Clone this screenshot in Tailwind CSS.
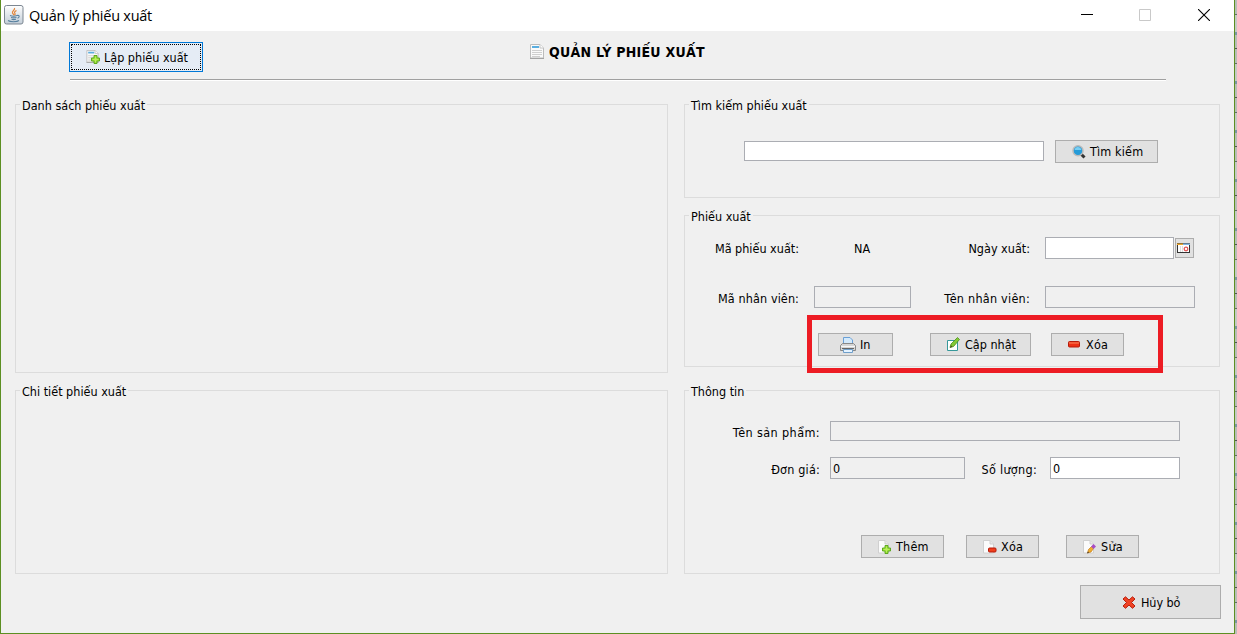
<!DOCTYPE html>
<html lang="vi">
<head>
<meta charset="utf-8">
<title>Quản lý phiếu xuất</title>
<script src="https://cdn.jsdelivr.net/npm/@tailwindcss/browser@4"></script>
</head>
<body class="w-[1237px] h-[634px] overflow-hidden flex bg-[#b9bdb7] text-black text-[12.5px] leading-[17px] whitespace-nowrap font-['DejaVu_Sans_Condensed','DejaVu_Sans',sans-serif]">
<svg class="hidden">
  <symbol id="page" viewBox="0 0 14 15"><path d="M.5 .5H10l3.500 3.500V14H.5Z" fill="#fafafa" stroke="#bcbcbc"/><path d="M10 .5V4h3.500" fill="#fff" stroke="#c4c4c4"/><path d="M2 2h7v2H2Z" fill="#5aaee0"/><path d="M2 6.500h10M2 8.500h10M2 10.500h10M2 12.500h8" stroke="#cfcfcf"/><path d="M0 14.500h14" stroke="#a4a4a4"/></symbol>
  <symbol id="blank" viewBox="0 0 14 14"><path d="M1.500 .5H8L11.500 4v9H1.500Z" fill="#fbfbfb" stroke="#d0d0d0"/><path d="M8 .5V4h3.500" fill="#e8e8e8" stroke="#cfcfcf"/></symbol>
  <symbol id="plus" viewBox="0 0 9 9"><path d="M3 .5h3V3h2.500v3H6v2.500H3V6H.5V3H3Z" fill="#8fd92b" stroke="#55a31a" stroke-width=".9"/><path d="M4.500 1.500v6M1.500 4.500h6" stroke="#b9ee5c" stroke-width="1.400"/></symbol>
</svg>
<div class="relative w-[1235px] h-[634px] flex flex-col border-x border-b border-[#5c8f22] bg-[#f0f0f0]">
  <header class="h-[31px] shrink-0 bg-white flex items-center">
    <svg class="ml-[3px] -mt-px w-5 h-5" viewBox="0 0 20 20"><defs><linearGradient id="jg" x2="0" y2="1"><stop stop-color="#fff"/><stop offset="1" stop-color="#c3ced8"/></linearGradient></defs><rect x=".5" y=".5" width="18.500" height="18.500" rx="2" fill="url(#jg)" stroke="#7d8792"/><path d="M10.500 3c1 2-3 3-2 5 .4 1 1.500 1.500 1.200 2.500M12.500 5.500c-2 1-2.500 2-1.500 3 .4.5 0 1.200-.5 1.700" fill="none" stroke="#e2873c" stroke-width="1.200"/><path d="M6 10.500c2 .8 5 .8 7 0M7 12.500c2 .6 3.500.6 5.500 0M7.500 14.300c1.500.5 3 .5 4.500 0M4 15.500c2 1.600 9 1.600 11 0M13 10.500c3-.6 2.600 2 .5 2.800" fill="none" stroke="#58819f" stroke-width="1.100"/></svg>
    <h1 class="ml-[5px] w-[1052px] text-[14.500px] leading-5 tracking-[-0.25px] font-['Open_Sans','Noto_Sans',sans-serif]">Quản lý phiếu xuất</h1>
    <svg class="-mt-px w-3 h-3" viewBox="0 0 12 12"><path d="M0 5.500h12" stroke="#000"/></svg>
    <svg class="-mt-px ml-[46px] w-3 h-3" viewBox="0 0 12 12"><path d="M.5 .5h11v11H.5Z" fill="none" stroke="#c9c9c9"/></svg>
    <svg class="-mt-px ml-[47px] w-3 h-3" viewBox="0 0 12 12"><path d="M0 0l12 12M12 0L0 12" stroke="#000" stroke-width="1.100"/></svg>
  </header>

  <div class="h-[48px] shrink-0 flex pt-[11px] pl-[68px]">
    <button class="w-[134px] h-[30px] border border-[#0078d7] bg-[#e5ecf5] p-px"><span class="w-full h-full flex items-center border border-dotted border-black pl-[14px]">
      <svg class="w-[14px] h-[14px]" viewBox="0 0 14 14"><use href="#page" width="13" height="13"/><use href="#plus" x="5" y="5" width="9" height="9"/></svg><span class="ml-[4px]">Lập phiếu xuất</span></span></button>
    <h2 class="ml-[327px] h-[18px] flex items-center text-[14px] tracking-[0.28px] font-bold"><svg class="w-[14px] h-[15px]"><use href="#page"/></svg><span class="ml-[5px] pt-[2px]">QUẢN LÝ PHIẾU XUẤT</span></h2>
  </div>
  <div class="ml-[69px] w-[1096px] h-[2px] shrink-0 bg-[#a0a0a0] border-b border-white"></div>

  <main class="flex gap-4 pl-[14px] pt-[15px]">
    <section class="w-[653px] flex flex-col gap-[9px]">
      <fieldset class="h-[277px] border border-[#dcdcdc]"><legend class="ml-[4px] px-[2px] h-[17px] pt-px">Danh sách phiếu xuất</legend></fieldset>
      <fieldset class="h-[192px] border border-[#dcdcdc]"><legend class="ml-[4px] px-[2px] h-[17px] pt-px">Chi tiết phiếu xuất</legend></fieldset>
    </section>
    <section class="w-[536px] flex flex-col">
      <fieldset class="h-[102px] border border-[#dcdcdc]"><legend class="ml-[4px] px-[2px] h-[17px] pt-px">Tìm kiếm phiếu xuất</legend>
        <div class="mt-[27px] ml-[59px] flex items-start">
          <div class="mt-px w-[300px] h-5 border border-[#abadb3] bg-white"></div>
          <button class="ml-[11px] w-[103px] h-[23px] flex items-center border border-[#adadad] bg-[#e1e1e1] pl-[16px]"><svg class="w-[14px] h-[14px]" viewBox="0 0 14 14"><path d="M9 9l3.500 3.500" stroke="#333" stroke-width="3"/><circle cx="6" cy="5.800" r="5" fill="#259bd8" stroke="#bbb" stroke-width="1.500"/><path d="M2.500 5c.5-4 6-4 7 0" fill="#79cff4"/></svg><span class="ml-[4px] tracking-[0.15px]">Tìm kiếm</span></button>
        </div>
      </fieldset>
      <fieldset class="mt-[9px] h-[160px] border border-[#dcdcdc]"><legend class="ml-[4px] px-[2px] h-[17px] pt-px">Phiếu xuất</legend>
        <div class="mt-[13px] flex items-center">
          <span class="w-[114px] text-right">Mã phiếu xuất:</span><span class="ml-[55px] w-[17px]">NA</span><span class="w-[159px] text-right">Ngày xuất:</span>
          <div class="ml-[15px] w-[129px] h-[22px] border border-[#abadb3] bg-white"></div>
          <button class="ml-px w-[19px] h-5 border border-[#adadad] bg-[#e1e1e1] flex items-center pl-px"><svg class="w-[14px] h-[12px]" viewBox="0 0 14 12"><rect x=".5" y="1.500" width="12" height="9" fill="#fff" stroke="#333"/><path d="M0 1h6v2H0Z" fill="#e9a42b"/><path d="M6 1h7v2H6Z" fill="#81b4e0"/><path d="M0 1.500h13" stroke="#444" stroke-opacity=".5"/><path d="M3.500 4v6M5.500 4v6" stroke="#ddd"/><circle cx="9" cy="7" r="1.800" fill="none" stroke="#e25555" stroke-width="1.300"/></svg></button>
        </div>
        <div class="mt-[27px] flex items-center">
          <span class="pt-[3px] w-[114px] text-right tracking-[0.1px]">Mã nhân viên:</span><div class="ml-[15px] w-[97px] h-[22px] border border-[#abadb3]"></div>
          <span class="pt-[3px] w-[119px] text-right tracking-[0.25px]">Tên nhân viên:</span><div class="ml-[15px] w-[150px] h-[22px] border border-[#abadb3]"></div>
        </div>
        <div class="mt-[25px] ml-[133px] flex">
          <button class="w-[75px] h-[23px] flex items-center border border-[#adadad] bg-[#e1e1e1] pl-[21px]"><svg class="w-4 h-4" viewBox="0 0 16 16"><path d="M3.500 7V.5H10L12.500 3v4Z" fill="#d3e9fb" stroke="#6aa0d6"/><path d="M2.500 6.500h11l2 2v5H.5v-5Z" fill="#d5d5d5" stroke="#888"/><path d="M1 9.500h14" stroke="#f7f7f7"/><path d="M2 11.500h12" stroke="#666"/><path d="M3.500 12.500h9v3h-9Z" fill="#e4f2ff" stroke="#6f9fca"/></svg><span class="ml-[4px]">In</span></button>
          <button class="ml-[37px] w-[101px] h-[23px] flex items-center border border-[#adadad] bg-[#e1e1e1] pl-[15px]"><svg class="-mt-[2px] w-[14px] h-[14px]" viewBox="0 0 14 14"><path d="M1.500 3.500h10v10h-10Z" fill="#fff" stroke="#36989a"/><path d="M4 10.500l1-3.500 6.500-6.500 2 2L7.500 9.500Z" fill="#83c934" stroke="#498e1d" stroke-width=".8"/><path d="M4 10.800l1-2.500 1.500 1.500Z" fill="#554c20"/></svg><span class="ml-[5px]">Cập nhật</span></button>
          <button class="ml-5 w-[73px] h-[23px] flex items-center border border-[#adadad] bg-[#e1e1e1] pl-[16px]"><svg class="w-3 h-[7px]" viewBox="0 0 12 7"><rect x=".5" y=".5" width="11" height="5.500" rx="1" fill="#ee3014" stroke="#b51b0b"/><path d="M1 2h10" stroke="#fb8a60"/></svg><span class="ml-[6px] tracking-[0.2px]">Xóa</span></button>
        </div>
      </fieldset>
      <fieldset class="mt-[15px] h-[192px] border border-[#dcdcdc]"><legend class="ml-[4px] px-[2px] h-[17px] pt-px">Thông tin</legend>
        <div class="mt-[22px] flex items-center">
          <span class="mt-[3px] w-[135px] text-right tracking-[0.4px]">Tên sản phẩm:</span><div class="ml-[10px] w-[350px] h-5 border border-[#abadb3]"></div>
        </div>
        <div class="mt-[16px] flex items-center">
          <span class="mt-[3px] w-[135px] text-right tracking-[0.2px]">Đơn giá:</span><div class="ml-[10px] w-[135px] h-[22px] flex items-center border border-[#abadb3] pl-[2px]">0</div>
          <span class="mt-[3px] w-[72px] text-right tracking-[0.3px]">Số lượng:</span><div class="ml-[13px] w-[130px] h-[22px] flex items-center border border-[#abadb3] bg-white pl-[2px]">0</div>
        </div>
        <div class="mt-[56px] ml-[176px] flex">
          <button class="w-[83px] h-[23px] flex items-center border border-[#adadad] bg-[#e1e1e1] pl-[15px]"><svg class="w-[15px] h-[14px]" viewBox="0 0 15 14"><use href="#blank" width="14" height="14"/><use href="#plus" x="5" y="5" width="9" height="9"/></svg><span class="ml-[4px] -mt-px tracking-[0.2px]">Thêm</span></button>
          <button class="ml-[22px] w-[73px] h-[23px] flex items-center border border-[#adadad] bg-[#e1e1e1] pl-[15px]"><svg class="w-[15px] h-[14px]" viewBox="0 0 15 14"><use href="#blank" width="14" height="14"/><rect x="6.500" y="8" width="7.500" height="4" rx="1" fill="#f03e1c" stroke="#b51b0b"/></svg><span class="ml-[4px] -mt-px tracking-[0.2px]">Xóa</span></button>
          <button class="ml-[27px] w-[73px] h-[23px] flex items-center border border-[#adadad] bg-[#e1e1e1] pl-[15px]"><svg class="w-[15px] h-[14px]" viewBox="0 0 15 14"><use href="#blank" width="14" height="14"/><path d="M5.500 13l1-3.500 3-3 2 2L9 12Z" fill="#f1ae2e" stroke="#c27a1a" stroke-width=".7"/><path d="M9 6.500l2.500-2.500 2.500 2.500L11.500 9Z" fill="#a84fc4"/><path d="M5 13.500l1-2 1 1Z" fill="#333"/></svg><span class="ml-[4px] -mt-px tracking-[0.3px]">Sửa</span></button>
        </div>
      </fieldset>
    </section>
  </main>
  <footer class="mt-[11px] flex">
    <button class="ml-[1079px] w-[141px] h-[34px] flex items-center border border-[#adadad] bg-[#e1e1e1] pl-[41px]"><svg class="w-[14px] h-[13px]" viewBox="0 0 14 13"><path d="M3.500 .8L7 4 10.500 .8 13 3 9.500 6.500 13 10l-2.500 2.300L7 9l-3.500 3.300L1 10l3.500-3.500L1 3Z" fill="#ef4325" stroke="#b8200e"/></svg><span class="ml-[5px] tracking-[-0.1px]">Hủy bỏ</span></button>
  </footer>
  <div class="absolute left-[806px] top-[315px] w-[356px] h-[58px] border-[5px] border-[#ed1c24]"></div>
</div>
<div class="w-[2px] h-full bg-[repeating-linear-gradient(#b9bdb7_0_14px,#666d68_14px_15px,#c6c9c4_15px_32px,#7c97a2_32px_35px,#b9bdb7_35px_48px,#555_48px_49px)]"></div>
</body>
</html>
